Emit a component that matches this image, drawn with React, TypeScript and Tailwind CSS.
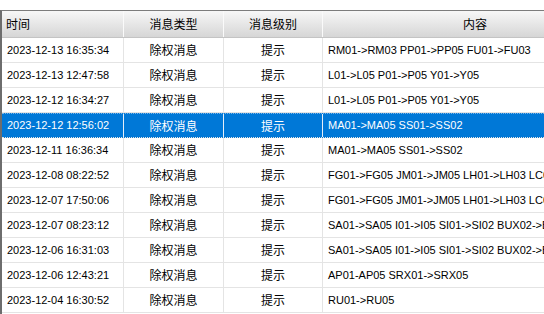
import React from 'react';

interface Row {
  time: string;
  type: string;
  level: string;
  content: string;
}

const rows: Row[] = [
  { time: '2023-12-13 16:35:34', type: '除权消息', level: '提示', content: 'RM01->RM03 PP01->PP05 FU01->FU03' },
  { time: '2023-12-13 12:47:58', type: '除权消息', level: '提示', content: 'L01->L05 P01->P05 Y01->Y05' },
  { time: '2023-12-12 16:34:27', type: '除权消息', level: '提示', content: 'L01->L05 P01->P05 Y01->Y05' },
  { time: '2023-12-12 12:56:02', type: '除权消息', level: '提示', content: 'MA01->MA05 SS01->SS02' },
  { time: '2023-12-11 16:36:34', type: '除权消息', level: '提示', content: 'MA01->MA05 SS01->SS02' },
  { time: '2023-12-08 08:22:52', type: '除权消息', level: '提示', content: 'FG01->FG05 JM01->JM05 LH01->LH03 LC01->LC05' },
  { time: '2023-12-07 17:50:06', type: '除权消息', level: '提示', content: 'FG01->FG05 JM01->JM05 LH01->LH03 LC01->LC05' },
  { time: '2023-12-07 08:23:12', type: '除权消息', level: '提示', content: 'SA01->SA05 I01->I05 SI01->SI02 BUX02->BUX05' },
  { time: '2023-12-06 16:31:03', type: '除权消息', level: '提示', content: 'SA01->SA05 I01->I05 SI01->SI02 BUX02->BUX05' },
  { time: '2023-12-06 12:43:21', type: '除权消息', level: '提示', content: 'AP01-AP05 SRX01->SRX05' },
  { time: '2023-12-04 16:30:52', type: '除权消息', level: '提示', content: 'RU01->RU05' },
];

const SELECTED = 3;

const latin = { fontFamily: '"Liberation Sans", "Noto Sans CJK SC", sans-serif' };
const cjk = { fontFamily: '"Noto Sans CJK SC", "Liberation Sans", sans-serif' };

export default function App() {
  return (
    <div className="w-[544px] h-[314px] bg-white overflow-hidden pt-[10px]">
      <div className="flex flex-col border-l-2 border-t border-l-[#6d6d6d] border-t-[#7c7c7c] h-full">
        {/* header */}
        <div className="flex h-[27px] shrink-0 bg-gradient-to-b from-[#f7f7f7] to-[#d6d6d6] border-b border-[#c4c4c4] text-[12px] text-black" style={cjk}>
          <div className="w-[122px] shrink-0 flex items-center pl-[4px] border-r border-r-[#fafafa]">时间</div>
          <div className="w-[100px] shrink-0 flex items-center justify-center border-r border-r-[#fafafa]">消息类型</div>
          <div className="w-[99px] shrink-0 flex items-center justify-center border-r border-r-[#fafafa]">消息级别</div>
          <div className="w-[304px] shrink-0 flex items-center justify-center">内容</div>
        </div>
        {rows.map((r, i) => {
          const sel = i === SELECTED;
          const line = sel ? 'border-r-[#e6eef8]' : 'border-r-[#e4e4e4]';
          return (
            <div
              key={i}
              className={`flex h-[25px] shrink-0 border-b ${sel ? 'bg-[#0078d7] text-white border-b-[#e4e4e4] border-t border-dotted border-t-[#7fb5e6]' : 'text-black border-b-[#e4e4e4]'}`}
            >
              <div className={`w-[122px] shrink-0 flex items-center pl-[5px] text-[11px] border-r ${line}`} style={latin}>{r.time}</div>
              <div className={`w-[100px] shrink-0 flex items-center justify-center text-[12px] border-r ${line}`} style={cjk}>{r.type}</div>
              <div className={`w-[99px] shrink-0 flex items-center justify-center text-[12px] border-r ${line}`} style={cjk}>{r.level}</div>
              <div className="w-[304px] shrink-0 flex items-center pl-[5px] text-[11px] whitespace-nowrap overflow-hidden" style={latin}>{r.content}</div>
            </div>
          );
        })}
      </div>
    </div>
  );
}
